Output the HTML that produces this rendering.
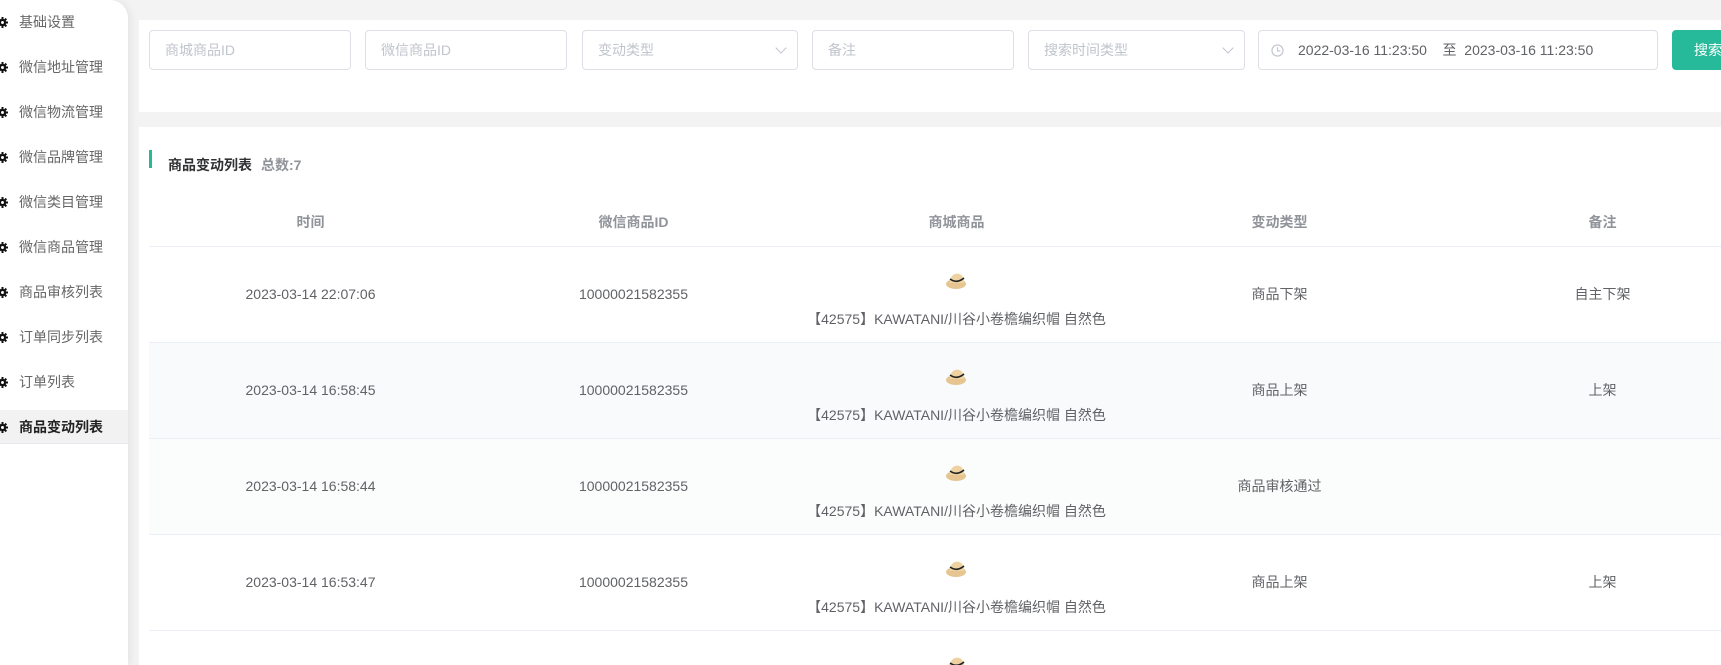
<!DOCTYPE html>
<html style="width:1721px;height:665px;overflow:hidden"><head><meta charset="utf-8"><style>
*{margin:0;padding:0;box-sizing:border-box}
body{width:1721px;height:665px;overflow:hidden;background:#f3f3f3;font-family:"Liberation Sans","Noto Sans CJK SC",sans-serif;color:#606266;position:relative}
#wrap{position:absolute;left:0;top:0;width:1721px;height:665px;overflow:hidden}
.side{position:absolute;left:0;top:0;width:128px;height:665px;background:#fff;border-top-right-radius:18px;box-shadow:3px 0 8px rgba(0,0,0,.06)}
.side .it{position:absolute;left:0;width:128px;height:34px;line-height:34px;font-size:14px;color:#666;padding-left:19px}
.side .it.act{background:#f2f2f2;color:#222;font-weight:bold;border-bottom:1px solid #e8e8ee}
.side .g{position:absolute;left:-3px;top:12px;width:11px;height:11px}
.card1{position:absolute;left:139px;top:20px;width:1600px;height:92px;background:#fff}
.inp{position:absolute;top:30px;height:40px;border:1px solid #dcdfe6;border-radius:4px;background:#fff;font-size:14px;color:#c0c4cc;line-height:38px;padding-left:15px}
.arr{position:absolute;right:12px;top:13px;width:8px;height:8px;border-right:1px solid #c0c4cc;border-bottom:1px solid #c0c4cc;transform:rotate(45deg)}
.btn{position:absolute;left:1672px;top:30px;width:90px;height:40px;background:#26b99a;border-radius:4px;color:#fff;font-size:14px;line-height:40px;padding-left:22px}
.card2{position:absolute;left:139px;top:127px;width:1582px;height:538px;background:#fff}
.bar{position:absolute;left:149px;top:150px;width:3px;height:18px;background:#26b99a}
.title{position:absolute;left:168px;top:155px;font-size:14px;font-weight:bold;color:#303133}
.title span{color:#909399;font-size:14px;margin-left:9px}
table{position:absolute;left:149px;top:198px;border-collapse:collapse;width:1615px;table-layout:fixed;font-size:14px}
th{height:48px;color:#909399;font-weight:bold;border-bottom:1px solid #ebeef5;text-align:center}
td{height:95px;border-bottom:1px solid #ebeef5;text-align:center;color:#606266;vertical-align:middle}
tr.s td{background:#f9fafc}
tr.h td{background:#fbfdfd}
.prod{position:relative;height:95px}
.prod svg{position:absolute;left:50%;margin-left:-13px;top:20px}
.prod div{position:absolute;left:0;right:0;top:62px;white-space:nowrap}
</style></head><body><div id="wrap">
<div class="side">
<div class="it" style="top:5px"><svg class="g" viewBox="0 0 12 12"><g stroke="#111" stroke-width="2.2"><line x1="6" y1="0" x2="6" y2="12"/><line x1="0" y1="6" x2="12" y2="6"/><line x1="1.8" y1="1.8" x2="10.2" y2="10.2"/><line x1="10.2" y1="1.8" x2="1.8" y2="10.2"/></g><circle cx="6" cy="6" r="4" fill="#111"/><circle cx="6" cy="6" r="1.6" fill="#fff"/></svg>基础设置</div>
<div class="it" style="top:50px"><svg class="g" viewBox="0 0 12 12"><g stroke="#111" stroke-width="2.2"><line x1="6" y1="0" x2="6" y2="12"/><line x1="0" y1="6" x2="12" y2="6"/><line x1="1.8" y1="1.8" x2="10.2" y2="10.2"/><line x1="10.2" y1="1.8" x2="1.8" y2="10.2"/></g><circle cx="6" cy="6" r="4" fill="#111"/><circle cx="6" cy="6" r="1.6" fill="#fff"/></svg>微信地址管理</div>
<div class="it" style="top:95px"><svg class="g" viewBox="0 0 12 12"><g stroke="#111" stroke-width="2.2"><line x1="6" y1="0" x2="6" y2="12"/><line x1="0" y1="6" x2="12" y2="6"/><line x1="1.8" y1="1.8" x2="10.2" y2="10.2"/><line x1="10.2" y1="1.8" x2="1.8" y2="10.2"/></g><circle cx="6" cy="6" r="4" fill="#111"/><circle cx="6" cy="6" r="1.6" fill="#fff"/></svg>微信物流管理</div>
<div class="it" style="top:140px"><svg class="g" viewBox="0 0 12 12"><g stroke="#111" stroke-width="2.2"><line x1="6" y1="0" x2="6" y2="12"/><line x1="0" y1="6" x2="12" y2="6"/><line x1="1.8" y1="1.8" x2="10.2" y2="10.2"/><line x1="10.2" y1="1.8" x2="1.8" y2="10.2"/></g><circle cx="6" cy="6" r="4" fill="#111"/><circle cx="6" cy="6" r="1.6" fill="#fff"/></svg>微信品牌管理</div>
<div class="it" style="top:185px"><svg class="g" viewBox="0 0 12 12"><g stroke="#111" stroke-width="2.2"><line x1="6" y1="0" x2="6" y2="12"/><line x1="0" y1="6" x2="12" y2="6"/><line x1="1.8" y1="1.8" x2="10.2" y2="10.2"/><line x1="10.2" y1="1.8" x2="1.8" y2="10.2"/></g><circle cx="6" cy="6" r="4" fill="#111"/><circle cx="6" cy="6" r="1.6" fill="#fff"/></svg>微信类目管理</div>
<div class="it" style="top:230px"><svg class="g" viewBox="0 0 12 12"><g stroke="#111" stroke-width="2.2"><line x1="6" y1="0" x2="6" y2="12"/><line x1="0" y1="6" x2="12" y2="6"/><line x1="1.8" y1="1.8" x2="10.2" y2="10.2"/><line x1="10.2" y1="1.8" x2="1.8" y2="10.2"/></g><circle cx="6" cy="6" r="4" fill="#111"/><circle cx="6" cy="6" r="1.6" fill="#fff"/></svg>微信商品管理</div>
<div class="it" style="top:275px"><svg class="g" viewBox="0 0 12 12"><g stroke="#111" stroke-width="2.2"><line x1="6" y1="0" x2="6" y2="12"/><line x1="0" y1="6" x2="12" y2="6"/><line x1="1.8" y1="1.8" x2="10.2" y2="10.2"/><line x1="10.2" y1="1.8" x2="1.8" y2="10.2"/></g><circle cx="6" cy="6" r="4" fill="#111"/><circle cx="6" cy="6" r="1.6" fill="#fff"/></svg>商品审核列表</div>
<div class="it" style="top:320px"><svg class="g" viewBox="0 0 12 12"><g stroke="#111" stroke-width="2.2"><line x1="6" y1="0" x2="6" y2="12"/><line x1="0" y1="6" x2="12" y2="6"/><line x1="1.8" y1="1.8" x2="10.2" y2="10.2"/><line x1="10.2" y1="1.8" x2="1.8" y2="10.2"/></g><circle cx="6" cy="6" r="4" fill="#111"/><circle cx="6" cy="6" r="1.6" fill="#fff"/></svg>订单同步列表</div>
<div class="it" style="top:365px"><svg class="g" viewBox="0 0 12 12"><g stroke="#111" stroke-width="2.2"><line x1="6" y1="0" x2="6" y2="12"/><line x1="0" y1="6" x2="12" y2="6"/><line x1="1.8" y1="1.8" x2="10.2" y2="10.2"/><line x1="10.2" y1="1.8" x2="1.8" y2="10.2"/></g><circle cx="6" cy="6" r="4" fill="#111"/><circle cx="6" cy="6" r="1.6" fill="#fff"/></svg>订单列表</div>
<div class="it act" style="top:410px"><svg class="g" viewBox="0 0 12 12"><g stroke="#111" stroke-width="2.2"><line x1="6" y1="0" x2="6" y2="12"/><line x1="0" y1="6" x2="12" y2="6"/><line x1="1.8" y1="1.8" x2="10.2" y2="10.2"/><line x1="10.2" y1="1.8" x2="1.8" y2="10.2"/></g><circle cx="6" cy="6" r="4" fill="#111"/><circle cx="6" cy="6" r="1.6" fill="#fff"/></svg>商品变动列表</div>
</div>

<div class="card1"></div>
<div class="inp" style="left:149px;width:202px">商城商品ID</div>
<div class="inp" style="left:365px;width:202px">微信商品ID</div>
<div class="inp" style="left:582px;width:216px">变动类型<span class="arr"></span></div>
<div class="inp" style="left:812px;width:202px">备注</div>
<div class="inp" style="left:1028px;width:217px">搜索时间类型<span class="arr"></span></div>
<div class="inp" style="left:1258px;width:400px;color:#606266;padding-left:12px"><svg width="13" height="13" viewBox="0 0 14 14" style="vertical-align:-2px;margin-right:14px"><circle cx="7" cy="7" r="6" fill="none" stroke="#c0c4cc" stroke-width="1.2"/><path d="M7 3.5V7.5H10" fill="none" stroke="#c0c4cc" stroke-width="1.2"/></svg>2022-03-16 11:23:50 &nbsp;&nbsp;&nbsp;至&nbsp;&nbsp;2023-03-16 11:23:50</div>
<div class="btn">搜索</div>

<div class="card2"></div>
<div class="bar"></div>
<div class="title">商品变动列表<span>总数:7</span></div>

<table>
<tr><th>时间</th><th>微信商品ID</th><th>商城商品</th><th>变动类型</th><th>备注</th></tr>
<tr><td>2023-03-14 22:07:06</td><td>10000021582355</td><td><div class="prod"><svg width="26" height="24" viewBox="0 0 26 24"><ellipse cx="12" cy="17" rx="10" ry="5" fill="#e6c590"/><path d="M6 16 C5 4 21 3 20 16 Z" fill="#efd2a2"/><path d="M6 12 Q13 17 20 11" stroke="#222" stroke-width="1.6" fill="none"/></svg><div>【42575】KAWATANI/川谷小卷檐编织帽 自然色</div></div></td><td>商品下架</td><td>自主下架</td></tr>
<tr class="s"><td>2023-03-14 16:58:45</td><td>10000021582355</td><td><div class="prod"><svg width="26" height="24" viewBox="0 0 26 24"><ellipse cx="12" cy="17" rx="10" ry="5" fill="#e6c590"/><path d="M6 16 C5 4 21 3 20 16 Z" fill="#efd2a2"/><path d="M6 12 Q13 17 20 11" stroke="#222" stroke-width="1.6" fill="none"/></svg><div>【42575】KAWATANI/川谷小卷檐编织帽 自然色</div></div></td><td>商品上架</td><td>上架</td></tr>
<tr class="h"><td>2023-03-14 16:58:44</td><td>10000021582355</td><td><div class="prod"><svg width="26" height="24" viewBox="0 0 26 24"><ellipse cx="12" cy="17" rx="10" ry="5" fill="#e6c590"/><path d="M6 16 C5 4 21 3 20 16 Z" fill="#efd2a2"/><path d="M6 12 Q13 17 20 11" stroke="#222" stroke-width="1.6" fill="none"/></svg><div>【42575】KAWATANI/川谷小卷檐编织帽 自然色</div></div></td><td>商品审核通过</td><td></td></tr>
<tr><td>2023-03-14 16:53:47</td><td>10000021582355</td><td><div class="prod"><svg width="26" height="24" viewBox="0 0 26 24"><ellipse cx="12" cy="17" rx="10" ry="5" fill="#e6c590"/><path d="M6 16 C5 4 21 3 20 16 Z" fill="#efd2a2"/><path d="M6 12 Q13 17 20 11" stroke="#222" stroke-width="1.6" fill="none"/></svg><div>【42575】KAWATANI/川谷小卷檐编织帽 自然色</div></div></td><td>商品上架</td><td>上架</td></tr>
<tr><td></td><td></td><td><div class="prod"><svg width="26" height="24" viewBox="0 0 26 24"><ellipse cx="12" cy="17" rx="10" ry="5" fill="#e6c590"/><path d="M6 16 C5 4 21 3 20 16 Z" fill="#efd2a2"/><path d="M6 12 Q13 17 20 11" stroke="#222" stroke-width="1.6" fill="none"/></svg></div></td><td></td><td></td></tr>
</table>
</div></body></html>
